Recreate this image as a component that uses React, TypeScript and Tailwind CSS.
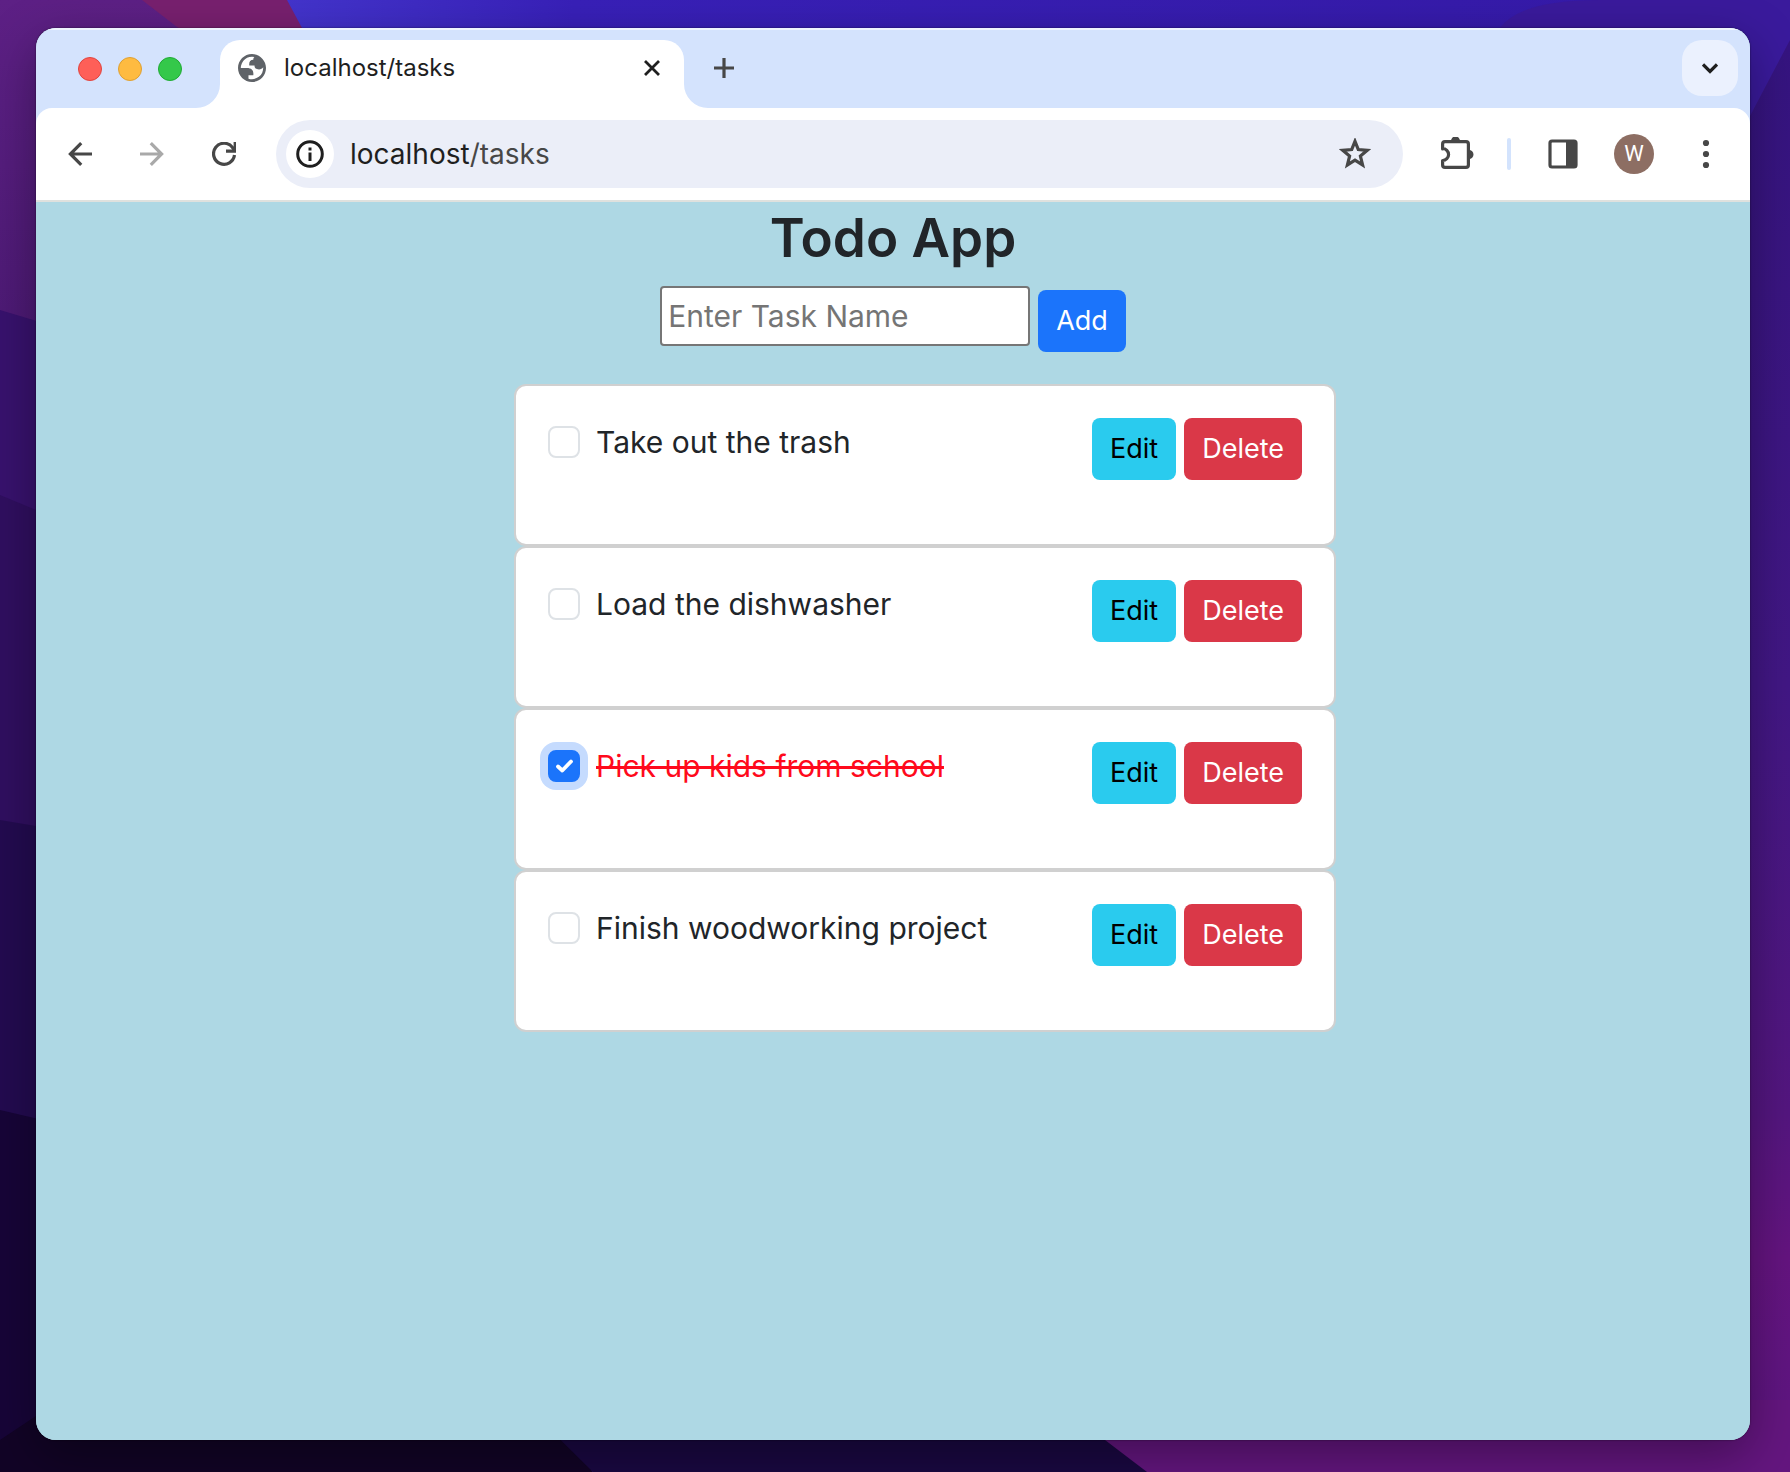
import { useState } from "react";

const Wallpaper = () => (
  <svg
    className="absolute inset-0 h-full w-full"
    viewBox="0 0 1790 1472"
    preserveAspectRatio="none"
    aria-hidden="true"
  >
    <defs>
      <linearGradient id="blue" x1="0" y1="0" x2="1" y2="0">
        <stop offset="0" stopColor="#4438d8" />
        <stop offset="0.16" stopColor="#4334cc" />
        <stop offset="0.32" stopColor="#3820b8" />
        <stop offset="1" stopColor="#3519a6" />
      </linearGradient>
      <linearGradient id="right" x1="0" y1="0" x2="0" y2="1">
        <stop offset="0" stopColor="#351480" />
        <stop offset="0.45" stopColor="#421785" />
        <stop offset="0.75" stopColor="#54167f" />
        <stop offset="0.85" stopColor="#64147f" />
        <stop offset="1" stopColor="#5c1682" />
      </linearGradient>
      <linearGradient id="left" x1="0" y1="0" x2="0" y2="1">
        <stop offset="0" stopColor="#5d2085" />
        <stop offset="1" stopColor="#4d1a75" />
      </linearGradient>
    </defs>
    <rect width="1790" height="1472" fill="url(#blue)" />
    <path d="M1500 28Q1520 0 1600 0H1790V200H1500Z" fill="#3a1a9c" />
    <path d="M1790 40L1740 135V1472H1790Z" fill="url(#right)" />
    <path d="M0 0H145L180 28V330H0Z" fill="url(#left)" />
    <path d="M142 0H287L302 28V60H220Z" fill="#78206f" />
    <path d="M0 310L60 328V530H0Z" fill="#38126e" />
    <path d="M0 495L60 520V860H0Z" fill="#300f60" />
    <path d="M0 820L60 830V1160H0Z" fill="#230b50" />
    <path d="M0 1110L60 1124V1472H0Z" fill="#170538" />
    <path d="M60 1400H540L593 1472H0V1440Z" fill="#120426" />
    <path d="M520 1400L593 1472H1150L1090 1400Z" fill="#1a0842" />
    <path d="M1060 1400L1105 1440L1147 1472H1790V1400Z" fill="#64167f" />
  </svg>
);

const Globe = () => (
  <svg className="size-7 shrink-0" viewBox="2 2 20 20" aria-hidden="true">
    <path
      d="M12 2C6.480 2 2 6.480 2 12s4.480 10 10 10 10-4.480 10-10S17.520 2 12 2zM4 12h4.400c3.407.022 4.922 1.730 4.543 5.127H9.488v2.470a8.004 8.004 0 0 0 10.498-8.083C19.327 12.504 18.332 13 17 13c-2.137 0-3.206-.916-3.206-2.750h-3.748c-.274-2.728.683-4.092 2.870-4.092 0-.975.327-1.597.811-1.970A8.004 8.004 0 0 0 4 12z"
      fill="#5f6368"
      fillRule="evenodd"
    />
  </svg>
);

const Foot = ({ className }: { className: string }) => (
  <svg className={className} viewBox="0 0 24 24" aria-hidden="true">
    <path d="M24 0V24H0A24 24 0 0 0 24 0Z" fill="#fff" />
  </svg>
);

const TitleBar = () => (
  <div className="flex h-20 items-center shadow-[inset_0_2px_0_#eef4fe]">
    <div className="flex w-[184px] shrink-0 gap-4 pt-0.5 pl-[42px]">
      <button aria-label="Close" className="size-6 rounded-full border border-[#e0443e] bg-[#fe5f58]" />
      <button aria-label="Minimize" className="size-6 rounded-full border border-[#dea032] bg-[#febb40]" />
      <button aria-label="Zoom" className="size-6 rounded-full border border-[#1fab33] bg-[#34c84a]" />
    </div>
    <div className="relative flex h-[68px] w-[464px] items-center self-end rounded-t-[20px] bg-white pt-1.5 pr-6 pb-[18px] pl-[18px]">
      <Foot className="absolute bottom-0 -left-6 size-6" />
      <Foot className="absolute -right-6 bottom-0 size-6 -scale-x-100" />
      <Globe />
      <span className="ml-[18px] grow text-[24px] leading-8 text-[#1f1f1f]">localhost/tasks</span>
      <button aria-label="Close tab" className="text-[#1f1f1f]">
        <svg className="size-4" viewBox="0 0 16 16" fill="none" stroke="currentColor" strokeWidth="2.8">
          <path d="M1 1L15 15M15 1L1 15" />
        </svg>
      </button>
    </div>
    <button aria-label="New tab" className="ml-[30px] text-[#474747]">
      <svg className="size-5" viewBox="0 0 20 20" fill="none" stroke="currentColor" strokeWidth="3.200">
        <path d="M10 0V20M0 10H20" />
      </svg>
    </button>
    <button
      aria-label="Search tabs"
      className="mr-3 ml-auto flex h-14 w-14 items-center justify-center rounded-[20px] bg-[#ebf1fe] text-[#1f1f1f]"
    >
      <svg className="size-4" viewBox="0 0 16 16" fill="none" stroke="currentColor" strokeWidth="3.200">
        <path d="M1 4.500L8 11.500L15 4.500" />
      </svg>
    </button>
  </div>
);

const Toolbar = () => (
  <div className="flex h-[94px] items-center rounded-t-2xl border-b-2 border-[#dfe1de] bg-white pr-10 pl-8 text-[#474747]">
    <button aria-label="Back">
      <svg className="size-6" viewBox="0 0 24 24" fill="none" stroke="currentColor" strokeWidth="3.200">
        <path d="M24 12H2M13.200 1.200L2.400 12L13.200 22.800" />
      </svg>
    </button>
    <button aria-label="Forward" disabled className="ml-12 text-[#a9a9a9]">
      <svg className="size-6" viewBox="0 0 24 24" fill="none" stroke="currentColor" strokeWidth="3.200">
        <path d="M0 12H22M10.800 1.200L21.600 12L10.800 22.800" />
      </svg>
    </button>
    <button aria-label="Reload" className="ml-12">
      <svg className="size-6" viewBox="0 0 24 24" fill="none" stroke="currentColor" strokeWidth="3.200">
        <path d="M22.500 13A10.500 10.500 0 1 1 20.500 5.500L23 9" />
        <path d="M23.200 0V9.200H14" />
      </svg>
    </button>
    <div className="ml-10 flex h-[68px] grow items-center rounded-full bg-[#ebeef8] pr-8 pl-2.5">
      <button
        aria-label="Site information"
        className="flex size-12 items-center justify-center rounded-full bg-white text-[#1f1f1f]"
      >
        <svg className="size-7" viewBox="0 0 28 28" fill="none" stroke="currentColor" strokeWidth="3">
          <circle cx="14" cy="14" r="12.300" />
          <path d="M14 12.500V21M14 7.500V10.500" />
        </svg>
      </button>
      <div className="ml-4 grow text-[28px] leading-9 text-[#1f1f1f]">
        localhost<span className="text-[#474747]">/tasks</span>
      </div>
      <button aria-label="Bookmark this tab">
        <svg className="size-8" viewBox="0 0 32 32" fill="none" stroke="currentColor" strokeWidth="3.200">
          <path d="M16 3.300L19.300 11.600L28.200 12.300L21.400 18.100L23.600 26.900L16 22.100L8.400 26.900L10.600 18.100L3.800 12.300L12.700 11.600Z" />
        </svg>
      </button>
    </div>
    <button aria-label="Extensions" className="ml-[38px]">
      <svg className="h-[34px] w-[33px]" viewBox="0 0 33 34" fill="none">
        <path
          d="M1.600 12V7Q1.600 4.600 4 4.600H25Q27.400 4.600 27.400 7V28Q27.400 30.400 25 30.400H4Q1.600 30.400 1.600 28V23.500A6 6 0 0 0 1.600 11.500Z"
          stroke="currentColor"
          strokeWidth="3.200"
          strokeLinejoin="round"
        />
        <path d="M10 4A4.500 4.500 0 0 1 19 4ZM28 13A4.500 4.500 0 0 1 28 22Z" fill="currentColor" />
      </svg>
    </button>
    <div className="ml-[33px] h-8 w-1 rounded-full bg-[#d3e3fd]" />
    <button aria-label="Side panel" className="ml-[37px]">
      <svg className="size-[30px]" viewBox="0 0 30 30">
        <rect x="2" y="2" width="26" height="26" rx="2" fill="none" stroke="currentColor" strokeWidth="3.200" />
        <path d="M18 2H28V28H18Z" fill="currentColor" />
      </svg>
    </button>
    <button
      aria-label="Profile"
      className="ml-9 flex size-10 items-center justify-center rounded-full bg-[#8d6e63] font-[Roboto] text-[22px] leading-none text-white"
    >
      W
    </button>
    <button aria-label="Menu" className="ml-12">
      <svg className="h-[30px] w-2" viewBox="0 0 8 30" fill="currentColor">
        <circle cx="4" cy="4" r="3.100" />
        <circle cx="4" cy="15" r="3.100" />
        <circle cx="4" cy="26" r="3.100" />
      </svg>
    </button>
  </div>
);

type Task = { id: number; name: string; done: boolean };

const initialTasks: Task[] = [
  { id: 1, name: "Take out the trash", done: false },
  { id: 2, name: "Load the dishwasher", done: false },
  { id: 3, name: "Pick up kids from school", done: true },
  { id: 4, name: "Finish woodworking project", done: false },
];

const buttonBase = "h-[62px] rounded-lg px-[18px] text-[27px] leading-9";

const TaskRow = ({ task, onToggle, onDelete }: { task: Task; onToggle: () => void; onDelete: () => void }) => (
  <li className="flex h-[162px] items-start rounded-xl border-2 border-[#d0d0d0] bg-white p-8">
    <span className="relative mt-2 flex size-8 shrink-0">
      <input
        id={`task-${task.id}`}
        type="checkbox"
        checked={task.done}
        onChange={onToggle}
        className="size-8 appearance-none rounded-lg border-2 border-[#dee2e6] bg-white checked:border-[#1b74fb] checked:bg-[#1b74fb] checked:ring-8 checked:ring-[#c5dbfe]"
      />
      {task.done && (
        <svg
          className="pointer-events-none absolute inset-0 size-8"
          viewBox="0 0 32 32"
          fill="none"
          stroke="#fff"
          strokeWidth="3.800"
          strokeLinecap="round"
          strokeLinejoin="round"
          aria-hidden="true"
        >
          <path d="M10 16.500L14.300 20.500L23 11.500" />
        </svg>
      )}
    </span>
    <label
      htmlFor={`task-${task.id}`}
      className={
        task.done
          ? "ml-4 grow text-[30px] leading-[48px] text-[#ff0a1c] line-through decoration-[3px]"
          : "ml-4 grow text-[30px] leading-[48px] text-[#212529]"
      }
    >
      {task.name}
    </label>
    <div className="flex gap-2">
      <button className={`${buttonBase} bg-[#2acbee] text-black`}>Edit</button>
      <button onClick={onDelete} className={`${buttonBase} bg-[#da3848] text-white`}>
        Delete
      </button>
    </div>
  </li>
);

const TodoApp = () => {
  const [tasks, setTasks] = useState(initialTasks);
  const [name, setName] = useState("");

  const add = () => {
    if (!name.trim()) return;
    setTasks([...tasks, { id: Date.now(), name: name.trim(), done: false }]);
    setName("");
  };

  return (
    <main className="grow bg-[#aed8e4] pb-8">
      <h1 className="pt-1 text-center text-[53px] leading-[64px] font-semibold text-[#212529]">Todo App</h1>
      <form
        className="mt-4 flex items-start justify-center gap-2"
        onSubmit={(e) => {
          e.preventDefault();
          add();
        }}
      >
        <input
          aria-label="Task name"
          placeholder="Enter Task Name"
          value={name}
          onChange={(e) => setName(e.target.value)}
          className="h-[60px] w-[370px] rounded-[4px] border-2 border-[#767676] bg-white px-1.5 text-[30px] text-[#212529] placeholder:text-[#757575]"
        />
        <button type="submit" className={`${buttonBase} mt-1 bg-[#1b74fb] text-white`}>
          Add
        </button>
      </form>
      <ul className="mx-auto mt-8 w-full max-w-[886px] pl-16">
        {tasks.map((task) => (
          <TaskRow
            key={task.id}
            task={task}
            onToggle={() => setTasks(tasks.map((t) => (t.id === task.id ? { ...t, done: !t.done } : t)))}
            onDelete={() => setTasks(tasks.filter((t) => t.id !== task.id))}
          />
        ))}
      </ul>
    </main>
  );
};

export default function App() {
  return (
    <div className="relative flex min-h-screen pt-7 pr-10 pb-8 pl-9 font-[Inter,sans-serif]">
      <Wallpaper />
      <div className="relative flex grow flex-col overflow-hidden rounded-[20px] bg-[#aed8e4] shadow-[0_16px_50px_rgba(0,0,0,0.35),0_0_2px_rgba(0,0,0,0.6)]">
        <header className="bg-[#d4e3fd]">
          <TitleBar />
          <Toolbar />
        </header>
        <TodoApp />
      </div>
    </div>
  );
}
